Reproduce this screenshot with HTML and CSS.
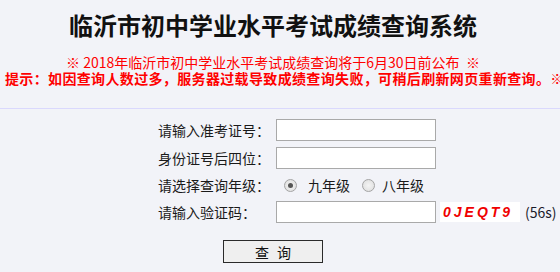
FILE: index.html
```html
<!DOCTYPE html>
<html lang="zh-CN">
<head>
<meta charset="utf-8">
<title>临沂市初中学业水平考试成绩查询系统</title>
<link rel="stylesheet" href="styles.css">
</head>
<body>
<div class="page">
  <header class="header">
    <h1 class="title">临沂市初中学业水平考试成绩查询系统</h1>
    <div class="notice">
      <p class="notice-date">※ 2018年临沂市初中学业水平考试成绩查询将于6月30日前公布 &nbsp;※</p>
      <p class="notice-tip">提示：如因查询人数过多，服务器过载导致成绩查询失败，可稍后刷新网页重新查询。※</p>
    </div>
  </header>
  <form class="form">
    <div class="grid">
      <label class="lbl">请输入准考证号：</label>
      <div class="field"><input class="txt" type="text"></div>
      <label class="lbl">身份证号后四位：</label>
      <div class="field"><input class="txt" type="text"></div>
      <label class="lbl">请选择查询年级：</label>
      <div class="field radios">
        <input class="radio" type="radio" name="grade" checked><span class="opt">九年级</span>
        <input class="radio radio-2" type="radio" name="grade"><span class="opt opt-2">八年级</span>
      </div>
      <label class="lbl">请输入验证码：</label>
      <div class="field captcha-row">
        <input class="txt" type="text">
        <span class="captcha">0JEQT9</span>
        <span class="timer">(56s)</span>
      </div>
    </div>
    <div class="actions">
      <button class="btn" type="button"><span>查</span><span>询</span></button>
    </div>
  </form>
</div>
</body>
</html>
```
FILE: styles.css
```css
html, body {
  margin: 0;
  padding: 0;
  background: #f2f3f8;
}
body {
  font-family: "Noto Sans CJK SC", "Noto Sans", sans-serif;
  color: #1a1a1a;
  width: 560px;
  height: 272px;
  overflow: hidden;
}
.page {
  width: 546px;
}
.header {
  width: 560px;
  box-sizing: border-box;
  padding-right: 14px;
  padding-top: 10px;
  padding-bottom: 22px;
  border-bottom: 1px solid #dad8fd;
}
.title {
  margin: 0;
  font-size: 24px;
  line-height: 30px;
  font-weight: bold;
  color: #111;
  text-align: center;
}
.notice {
  margin-top: 14px;
  color: #ff0000;
}
.notice p {
  margin: 0;
  font-size: 14px;
  line-height: 16px;
  white-space: nowrap;
}
.notice-date {
  text-align: center;
}
.notice-tip {
  font-weight: bold;
  padding-left: 5px;
  letter-spacing: 0.35px;
}
.form {
  margin: 0;
  padding-top: 10px;
}
.grid {
  display: grid;
  grid-template-columns: 118px auto;
  grid-template-rows: 22px 22px 20px 22px;
  row-gap: 6px;
  margin-left: 158px;
  font-size: 14px;
}
.lbl {
  display: flex;
  align-items: center;
  white-space: nowrap;
  line-height: 20px;
}
.field {
  display: flex;
  align-items: center;
  white-space: nowrap;
}
.txt {
  box-sizing: border-box;
  width: 160px;
  height: 22px;
  margin: 0;
  border: 1px solid #a9a9a9;
  background: #fff;
  padding: 0 3px;
  font-size: 14px;
}
.radios {
  padding-left: 8px;
}
.radio {
  appearance: none;
  -webkit-appearance: none;
  box-sizing: border-box;
  width: 13px;
  height: 13px;
  margin: 0;
  border: 1px solid #a4a4a4;
  border-radius: 50%;
  background: radial-gradient(circle, #f4f4f4 0, #dcdcdc 100%);
  position: relative;
}
.radio:checked::after {
  content: "";
  position: absolute;
  left: 3px;
  top: 3px;
  width: 5px;
  height: 5px;
  border-radius: 50%;
  background: #555;
}
.opt {
  margin-left: 11px;
  line-height: 20px;
}
.radio-2 {
  margin-left: 12px;
}
.opt-2 {
  margin-left: 7px;
}
.captcha {
  margin-left: 4px;
  width: 80px;
  height: 20px;
  box-sizing: border-box;
  padding-left: 3px;
  background: #fff;
  color: #f00000;
  font-family: "Liberation Sans", Arial, sans-serif;
  font-weight: bold;
  font-style: italic;
  font-size: 14px;
  line-height: 20px;
  letter-spacing: 3px;
}
.timer {
  margin-left: 5px;
  font-size: 14px;
  color: #1a1a2a;
}
.actions {
  display: flex;
  justify-content: center;
  padding-top: 17px;
}
.btn {
  box-sizing: border-box;
  width: 100px;
  height: 23px;
  margin: 0;
  padding: 0;
  border: 1px solid #2a2a2a;
  background: #efefef;
  display: flex;
  justify-content: center;
  align-items: center;
  gap: 8px;
  font-family: "Noto Sans CJK SC", sans-serif;
  font-size: 14px;
  color: #111;
}
```
